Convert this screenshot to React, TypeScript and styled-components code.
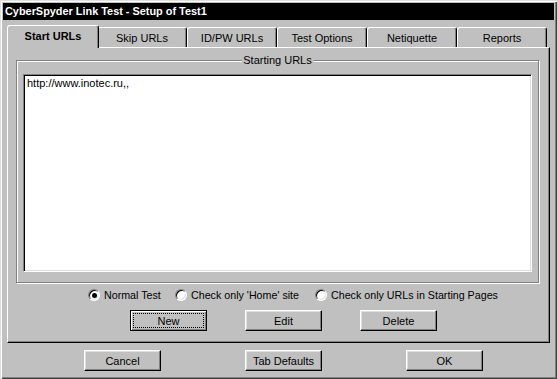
import styled, { createGlobalStyle, css } from "styled-components";

const face = "#c0c0c0";
const light = "#dfdfdf";
const shadow = "#808080";

const GlobalStyle = createGlobalStyle`
   body {
      margin: 0;
      background: ${face};
      font-family: "Liberation Sans", Arial, sans-serif;
      font-size: 11px;
   }
`;

const tabs = ["Start URLs", "Skip URLs", "ID/PW URLs", "Test Options", "Netiquette", "Reports"];

const radios = [
   { label: "Normal Test", checked: true, width: 87 },
   { label: "Check only 'Home' site", checked: false, width: 140 },
   { label: "Check only URLs in Starting Pages", checked: false },
];

export default function App() {
   return (
      <>
         <GlobalStyle />
         <Window>
            <TitleBar>CyberSpyder Link Test - Setup of Test1</TitleBar>
            <Body>
               <TabStrip>
                  {tabs.map((tab, i) => (
                     <Tab key={tab} $active={i === 0}>
                        {tab}
                     </Tab>
                  ))}
               </TabStrip>
               <Panel>
                  <GroupBox>
                     <Caption>Starting URLs</Caption>
                     <UrlList>http://www.inotec.ru,,</UrlList>
                  </GroupBox>
                  <RadioRow>
                     {radios.map((radio) => (
                        <RadioItem key={radio.label} $width={radio.width}>
                           <RadioCircle $checked={radio.checked} />
                           {radio.label}
                        </RadioItem>
                     ))}
                  </RadioRow>
                  <PanelButtons>
                     <Button $default>
                        <Focus>New</Focus>
                     </Button>
                     <Button>Edit</Button>
                     <Button>Delete</Button>
                  </PanelButtons>
               </Panel>
            </Body>
            <Footer>
               <Button>Cancel</Button>
               <Button>Tab Defaults</Button>
               <Button>OK</Button>
            </Footer>
         </Window>
      </>
   );
}

const Window = styled.div`
   width: 557px;
   height: 379px;
   box-sizing: border-box;
   background: ${face};
   padding: 3px 3px 0 3px;
   display: flex;
   flex-direction: column;
   box-shadow: inset 1px 1px ${light}, inset 2px 2px #fff,
      inset -1px -1px #404040, inset -2px -2px ${shadow};
`;

const TitleBar = styled.div`
   height: 17px;
   background: #000;
   color: #fff;
   font-weight: bold;
   font-size: 10.9px;
   line-height: 17px;
   padding-left: 2px;
   white-space: nowrap;
`;

const Body = styled.div`
   padding: 5px 4px 0 4px;
   display: flex;
   flex-direction: column;
`;

const TabStrip = styled.div`
   height: 22px;
   display: flex;
   align-items: flex-end;
`;

const Tab = styled.div<{ $active?: boolean }>`
   width: 90px;
   height: 20px;
   box-sizing: border-box;
   display: flex;
   align-items: center;
   justify-content: center;
   padding-top: 1px;
   background: ${face};
   border-top: 1px solid #fff;
   border-left: 1px solid #fff;
   border-right: 1px solid #000;
   border-radius: 3px 3px 0 0;
   box-shadow: inset -1px 0 ${shadow};
   color: #000;
   white-space: nowrap;

   ${({ $active }) =>
      $active &&
      css`
         position: relative;
         z-index: 1;
         width: 92px;
         height: 23px;
         margin-right: -2px;
         margin-bottom: -1px;
         padding-top: 0;
         padding-bottom: 2px;
         font-weight: bold;
      `}
`;

const Panel = styled.div`
   height: 296px;
   box-sizing: border-box;
   border-top: 1px solid #fff;
   border-left: 1px solid #fff;
   border-right: 1px solid #000;
   border-bottom: 1px solid #000;
   box-shadow: inset -1px -1px ${shadow};
   padding: 12px 0 0 8px;
   display: flex;
   flex-direction: column;
`;

const GroupBox = styled.div`
   position: relative;
   width: 523px;
   height: 223px;
   box-sizing: border-box;
   border: 1px solid ${shadow};
   box-shadow: inset 1px 1px #fff, 1px 1px #fff;
   padding: 13px 6px 10px 6px;
   display: flex;
   flex-direction: column;
`;

const Caption = styled.span`
   position: absolute;
   top: -7px;
   left: 50%;
   transform: translateX(-50%);
   background: ${face};
   padding: 0 2px;
   line-height: 13px;
   white-space: nowrap;
`;

const UrlList = styled.div`
   flex: 1;
   background: #fff;
   border: 1px solid;
   border-color: ${shadow} #fff #fff ${shadow};
   box-shadow: inset 1px 1px #000, inset -1px -1px ${light};
   padding: 2px 3px;
   line-height: 13px;
`;

const RadioRow = styled.div`
   margin-top: 6px;
   padding-left: 72px;
   height: 12px;
   display: flex;
   align-items: center;
   font-size: 10.7px;
`;

const RadioItem = styled.label<{ $width?: number }>`
   display: flex;
   align-items: center;
   gap: 4px;
   white-space: nowrap;
   line-height: 12px;
   width: ${({ $width }) => ($width ? `${$width}px` : "auto")};
`;

const RadioCircle = styled.span<{ $checked?: boolean }>`
   width: 12px;
   height: 12px;
   box-sizing: border-box;
   border-radius: 50%;
   border: 1px solid;
   border-color: ${shadow} #fff #fff ${shadow};
   background: #fff;
   box-shadow: inset 1px 1px #000, inset -1px -1px ${light};
   display: flex;
   align-items: center;
   justify-content: center;
   flex-shrink: 0;

   &::after {
      content: "";
      width: 5px;
      height: 5px;
      border-radius: 50%;
      background: #000;
      display: ${({ $checked }) => ($checked ? "block" : "none")};
   }
`;

const PanelButtons = styled.div`
   margin-top: 9px;
   padding-left: 114px;
   display: flex;
   gap: 38px;
`;

const Button = styled.button<{ $default?: boolean }>`
   width: 77px;
   height: 21px;
   box-sizing: border-box;
   padding: 0;
   background: ${face};
   font-family: "Liberation Sans", Arial, sans-serif;
   font-size: 11px;
   color: #000;
   border: 1px solid;
   border-color: #fff #000 #000 #fff;
   box-shadow: inset -1px -1px ${shadow}, inset 1px 1px ${light};
   display: flex;
   align-items: center;
   justify-content: center;

   ${({ $default }) =>
      $default &&
      css`
         border-color: #000;
         box-shadow: inset 1px 1px #fff, inset -1px -1px ${shadow};
         padding: 2px;
      `}
`;

const Focus = styled.span`
   flex: 1;
   align-self: stretch;
   border: 1px dotted #000;
   display: flex;
   align-items: center;
   justify-content: center;
`;

const Footer = styled.div`
   margin-top: 7px;
   padding-left: 81px;
   display: flex;
   gap: 84px;
`;
